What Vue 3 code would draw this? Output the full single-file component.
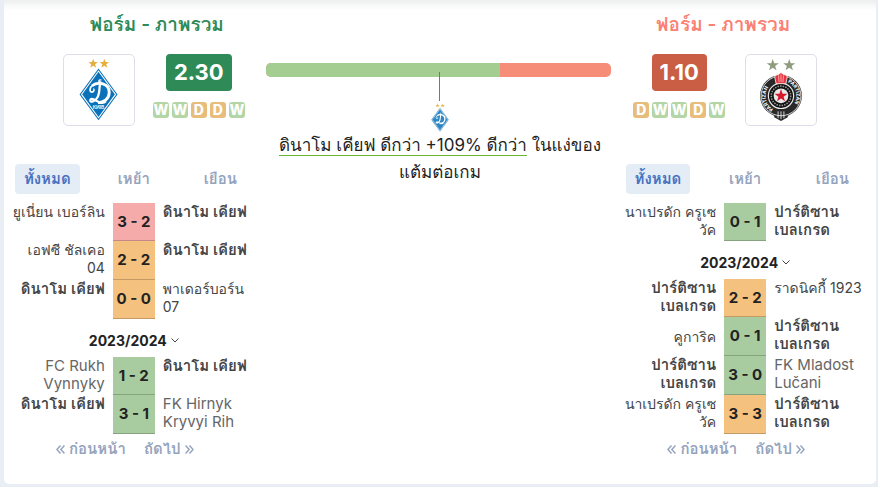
<template>
  <main class="card">
    <section v-for="team in teams" :key="team.id" class="team" :class="team.side">
      <h2 class="team-title">ฟอร์ม - ภาพรวม</h2>

      <div class="summary">
        <div class="crest">
          <svg v-if="team.id === 'dynamo'" viewBox="0 0 72 72" role="img" aria-label="ดินาโม เคียฟ">
            <path v-for="(p, i) in dynamoCrest" :key="i" v-bind="p" />
            <text x="35.5" y="56" class="kyiv">КИЇВ</text>
          </svg>
          <svg v-else viewBox="0 0 72 72" role="img" aria-label="ปาร์ติซาน เบลเกรด">
            <path :d="star(27.5, 10.5, 6.5)" fill="#8e9c7d" />
            <path :d="star(44.5, 10.5, 6.5)" fill="#8e9c7d" />
            <circle cx="36" cy="42" r="21.5" fill="#292929" />
            <path d="M29 57v7l7 4 7-4v-7z" fill="#292929" />
            <path d="M33 58v7M36 58v8M39 58v7" stroke="#ddd" stroke-width="1" />
            <circle cx="36" cy="42" r="20.500" fill="none" stroke="#fff" stroke-width="0.8" />
            <path id="crest-ring-left" d="M28 55.500A15.500 15.500 0 0 1 29 28" fill="none" />
            <path id="crest-ring-right" d="M43 28A15.500 15.500 0 0 1 44 55.500" fill="none" />
            <text class="crest-text"><textPath href="#crest-ring-left">PARTIZAN</textPath></text>
            <text class="crest-text"><textPath href="#crest-ring-right">PARTIZAN</textPath></text>
            <circle cx="36" cy="42" r="13" fill="#111" stroke="#e8e8e8" stroke-width="1.2" />
            <circle cx="36" cy="42" r="10" fill="none" stroke="#999" stroke-width="1.6" stroke-dasharray="1.5 1.2" />
            <circle cx="36" cy="42" r="7.6" fill="#e9e9e9" />
            <path :d="star(36, 42, 7)" fill="#d7192d" />
            <path d="M31 29.500l-1.500-7q1-2.500 4-2.500l2.500-2 2.500 2q3 0 4 2.500l-1.500 7z" fill="#e33440" stroke="#fff" stroke-width="0.8" />
            <path d="M33.500 21l.5 7M36 20v8M38.500 21l-.5 7" stroke="#ffb7b7" stroke-width="0.9" />
          </svg>
        </div>
        <div class="rating">
          <strong class="rating-value">{{ team.rating }}</strong>
          <div class="form">
            <span v-for="(r, i) in team.form" :key="i" :class="r === 'W' ? 'win' : 'draw'">{{ r }}</span>
          </div>
        </div>
      </div>

      <nav class="tabs">
        <button
          v-for="tab in tabs"
          :key="tab"
          type="button"
          :class="{ active: active[team.id] === tab }"
          @click="active[team.id] = tab"
        >
          {{ tab }}
        </button>
      </nav>

      <template v-for="(group, g) in team.groups" :key="g">
        <button v-if="group.season" type="button" class="season">
          {{ group.season }}
          <svg viewBox="0 0 8 5" aria-hidden="true"><path d="M.5.5 4 4 7.500.5" /></svg>
        </button>
        <table class="matches">
          <tbody>
            <tr v-for="(m, i) in group.matches" :key="i">
              <td class="home" :class="{ own: m.own === 'home', thai: isThai(m.home), middle: m.middle }">{{ m.home }}</td>
              <td class="score" :class="m.result">{{ m.score }}</td>
              <td class="away" :class="{ own: m.own === 'away', thai: isThai(m.away) }">{{ m.away }}</td>
            </tr>
          </tbody>
        </table>
      </template>

      <nav class="pager">
        <a href="#">
          <svg viewBox="0 0 8 8" aria-hidden="true"><path d="M4 .5.8 4 4 7.500M7.500.5 4.300 4l3.200 3.500" /></svg>
          ก่อนหน้า
        </a>
        <a href="#">
          ถัดไป
          <svg viewBox="0 0 8 8" aria-hidden="true"><path d="M.5.5 3.700 4 .5 7.500M4 .5 7.200 4 4 7.500" /></svg>
        </a>
      </nav>
    </section>

    <section class="compare">
      <div class="bar">
        <div class="bar-home" :style="{ width: share + '%' }"></div>
      </div>
      <div class="pointer"></div>
      <svg class="mini-crest" viewBox="14 3 43 65" aria-hidden="true">
        <path v-for="(p, i) in dynamoCrest" :key="i" v-bind="p" />
      </svg>
      <p>
        <span class="underlined">ดินาโม เคียฟ ดีกว่า +109% ดีกว่า</span> ในแง่ของ<br />แต้มต่อเกม
      </p>
    </section>
  </main>
</template>

<script setup>
import { reactive } from 'vue'

const tabs = ['ทั้งหมด', 'เหย้า', 'เยือน']
const active = reactive({ dynamo: 'ทั้งหมด', partizan: 'ทั้งหมด' })

const dynamo = 'ดินาโม เคียฟ'
const partizan = 'ปาร์ติซาน\nเบลเกรด'

const teams = [
  {
    id: 'dynamo',
    side: 'left',
    rating: '2.30',
    form: ['W', 'W', 'D', 'D', 'W'],
    groups: [
      {
        matches: [
          { home: 'ยูเนี่ยน เบอร์ลิน', score: '3 - 2', away: dynamo, own: 'away', result: 'loss' },
          { home: 'เอฟซี ชัลเคอ\n04', score: '2 - 2', away: dynamo, own: 'away', result: 'draw' },
          { home: dynamo, score: '0 - 0', away: 'พาเดอร์บอร์น\n07', own: 'home', result: 'draw' }
        ]
      },
      {
        season: '2023/2024',
        matches: [
          { home: 'FC Rukh\nVynnyky', score: '1 - 2', away: dynamo, own: 'away', result: 'win' },
          { home: dynamo, score: '3 - 1', away: 'FK Hirnyk\nKryvyi Rih', own: 'home', result: 'win' }
        ]
      }
    ]
  },
  {
    id: 'partizan',
    side: 'right',
    rating: '1.10',
    form: ['D', 'W', 'W', 'D', 'W'],
    groups: [
      {
        matches: [
          { home: 'นาเปรดัก ครูเซ\nวัค', score: '0 - 1', away: partizan, own: 'away', result: 'win' }
        ]
      },
      {
        season: '2023/2024',
        matches: [
          { home: partizan, score: '2 - 2', away: 'ราดนิคกี้ 1923', own: 'home', result: 'draw' },
          { home: 'คูการิค', score: '0 - 1', away: partizan, own: 'away', result: 'win', middle: true },
          { home: partizan, score: '3 - 0', away: 'FK Mladost\nLučani', own: 'home', result: 'win' },
          { home: 'นาเปรดัก ครูเซ\nวัค', score: '3 - 3', away: partizan, own: 'away', result: 'draw' }
        ]
      }
    ]
  }
]

const share = (2.3 / (2.3 + 1.1)) * 100

const isThai = (name) => /[\u0e00-\u0e7f]/.test(name)

// five-pointed star path around a centre
const star = (cx, cy, r) => {
  const points = []
  for (let i = 0; i < 10; i++) {
    const radius = i % 2 ? r * 0.4 : r
    const angle = (Math.PI / 5) * i - Math.PI / 2
    points.push(`${(cx + radius * Math.cos(angle)).toFixed(2)} ${(cy + radius * Math.sin(angle)).toFixed(2)}`)
  }
  return `M${points.join('L')}z`
}

const line = (d, width) => ({ d, fill: 'none', stroke: '#fff', 'stroke-width': width })

const dynamoCrest = [
  { d: star(30, 9, 5.2), fill: '#e6ae3c' },
  { d: star(41.5, 9, 5.2), fill: '#e6ae3c' },
  { d: 'M35.5 14 55 40.500 35.500 67 16 40.500z', fill: '#0b72b9' },
  line('M35.5 16.500 53 40.500 35.500 64.500 18 40.500z', 1.1),
  line('M29 31.500C35 27 46.500 29 46.500 38.500 46.500 45 41 49 35 49', 3),
  line('M37.5 27C36 33 37 39 34.500 43.500 32 48.500 26.500 49 27 46.500 27.500 44 31 45.500 34 47.500 37 49.500 41 50 43 47.500', 2.3),
  line('M30 31C25.500 33.500 26 39 29.500 38 31.500 37 31 35 30 35', 1.7),
  line('M37 29C34.500 27 36.500 24.500 38.500 26', 1.4)
]
</script>

<style>
body {
  background: #e9eef4;
}
</style>

<style scoped>
.card {
  display: grid;
  grid-template-columns: 3fr 4fr 3fr;
  margin: 0 2px 3px 4px;
  padding-bottom: 20px;
  border-radius: 0 0 5px 5px;
  background: #fff linear-gradient(#edf0f0, #fff 10px) no-repeat;
  font-family: Inter, Tahoma, Loma, Waree, Garuda, 'Noto Sans Thai Looped', 'Noto Sans Thai', sans-serif;
  font-size: 15px;
  color: #222;
}

.team {
  min-width: 0;
}
.team.left {
  grid-column: 1;
  grid-row: 1;
  padding-right: 2px;
}
.team.right {
  grid-column: 3;
  grid-row: 1;
}

.team-title {
  margin: 0;
  padding: 10px 0 14px 46px;
  font-size: 19px;
  font-weight: 600;
  line-height: 30px;
  text-align: center;
  color: #2e8b57;
}
.right .team-title {
  padding: 10px 44px 14px 0;
  color: #fa8072;
}

.summary {
  display: flex;
  justify-content: center;
  gap: 18px;
  height: 72px;
  padding-left: 40px;
}
.right .summary {
  flex-direction: row-reverse;
  gap: 20px;
  padding: 0 40px 0 0;
}
.crest {
  box-sizing: border-box;
  width: 72px;
  height: 72px;
  border: 1px solid #dcdfe9;
  border-radius: 5px;
}
.crest svg {
  display: block;
  width: 100%;
  height: 100%;
}
.crest-text {
  font-size: 5px;
  font-weight: 700;
  fill: #fff;
}
.kyiv {
  font-size: 5px;
  font-weight: 600;
  text-anchor: middle;
  fill: #fff;
}

.rating {
  display: flex;
  flex-direction: column;
  align-items: center;
}
.rating-value {
  padding: 0 8px;
  border-radius: 4px;
  background: #2e8b57;
  font-size: 22px;
  font-weight: 700;
  line-height: 37px;
  color: #fff;
}
.right .rating-value {
  background: #c95e45;
}
.form {
  display: flex;
  gap: 3px;
  margin-top: 11px;
}
.form span {
  width: 16px;
  border-radius: 3px;
  font-size: 14px;
  font-weight: 800;
  line-height: 16px;
  text-align: center;
  color: #fff;
}
.form .win {
  background: #b4d6a6;
}
.form .draw {
  background: #e8bd7c;
}

button {
  border: 0;
  background: none;
  font-family: inherit;
  cursor: pointer;
}
.tabs {
  display: grid;
  grid-template-columns: repeat(3, 1fr);
  justify-items: center;
  margin: 38px 0 9px;
}
.tabs button {
  padding: 0 9px;
  border-radius: 4px;
  font-size: 15px;
  font-weight: 600;
  line-height: 30px;
  color: #95a3bd;
}
.tabs .active {
  background: #e4ecf6;
  color: #4672c1;
}

.matches {
  width: 100%;
  table-layout: fixed;
  border-collapse: separate;
  border-spacing: 0;
}
.matches td {
  box-sizing: border-box;
  height: 39px;
  padding: 0 8px;
  line-height: 18px;
  vertical-align: top;
  white-space: pre;
  color: #666;
}
.matches tr:first-child td {
  height: 38px;
}
.matches .home {
  text-align: right;
}
.matches .thai {
  font-size: 14px;
  color: #444;
}
.matches .own {
  font-size: 15px;
  font-weight: 600;
}
.matches .middle {
  vertical-align: middle;
}
.matches .score {
  width: 42px;
  padding: 0;
  border-bottom: 1px solid rgba(0, 0, 0, 0.2);
  font-weight: 700;
  text-align: center;
  vertical-align: middle;
  color: #222;
}
.matches .win {
  background: #a8cb9f;
}
.matches .draw {
  background: #f5c17f;
}
.matches .loss {
  background: #f6abab;
}

.season {
  display: flex;
  justify-content: center;
  align-items: center;
  gap: 4px;
  width: 100%;
  height: 38px;
  padding: 5px 0 0;
  font-size: 14px;
  font-weight: 700;
  color: #222;
}
.season svg {
  width: 8px;
  height: 5px;
}
.season path {
  fill: none;
  stroke: #444;
}

.pager {
  display: flex;
  justify-content: center;
  gap: 18px;
  padding-right: 18px;
}
.pager a {
  display: flex;
  align-items: center;
  gap: 4px;
  font-weight: 600;
  line-height: 30px;
  color: #95a3bd;
  text-decoration: none;
}
.pager svg {
  width: 9px;
  height: 9px;
}
.pager path {
  fill: none;
  stroke: #95a3bd;
  stroke-width: 1.3;
}

.compare {
  display: flex;
  flex-direction: column;
  align-items: center;
  grid-column: 2;
  grid-row: 1;
  padding-top: 63px;
}
.bar {
  align-self: stretch;
  height: 14px;
  margin-right: 3px;
  border-radius: 5px;
  background: #f68d78;
  overflow: hidden;
}
.bar-home {
  height: 100%;
  background: #a3cd91;
}
.pointer {
  width: 1px;
  height: 29px;
  margin-top: -5px;
  background: #777;
  z-index: 1;
}
.mini-crest {
  width: 20px;
  height: 29px;
  margin-top: 2px;
  opacity: 0.85;
}
.compare p {
  margin: 0;
  font-size: 17px;
  line-height: 27px;
  text-align: center;
}
.underlined {
  border-bottom: 1px solid #6ab82f;
}
</style>
